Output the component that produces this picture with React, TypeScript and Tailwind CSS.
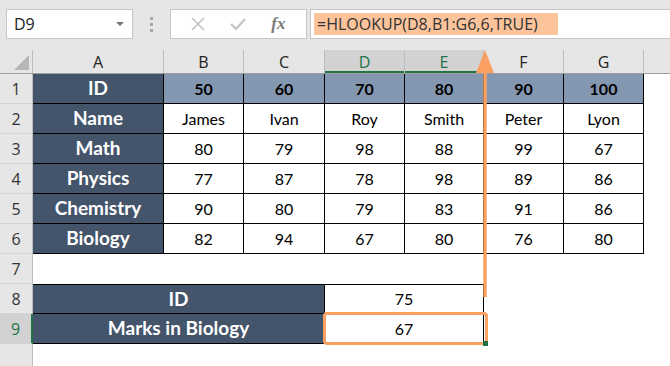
import React from 'react';

const cols = [
  { key: 'A', w: 131 },
  { key: 'B', w: 80 },
  { key: 'C', w: 81 },
  { key: 'D', w: 80 },
  { key: 'E', w: 79 },
  { key: 'F', w: 80 },
  { key: 'G', w: 80 },
];

const ids = ['50', '60', '70', '80', '90', '100'];

const rows: { label: string; values: string[] }[] = [
  { label: 'Name', values: ['James', 'Ivan', 'Roy', 'Smith', 'Peter', 'Lyon'] },
  { label: 'Math', values: ['80', '79', '98', '88', '99', '67'] },
  { label: 'Physics', values: ['77', '87', '78', '98', '89', '86'] },
  { label: 'Chemistry', values: ['90', '80', '79', '83', '91', '86'] },
  { label: 'Biology', values: ['82', '94', '67', '80', '76', '80'] },
];

const cellFont = { fontFamily: 'Lato, "Liberation Sans", sans-serif' };
const uiFont = { fontFamily: '"Open Sans", "DejaVu Sans", sans-serif' };

function RowHead({ n, active }: { n?: number; active?: boolean }) {
  return (
    <div
      className={`w-[33px] shrink-0 h-full flex items-center justify-center text-[16px] border-b border-[#d4d4d4] ${
        active ? 'bg-[#d2d2d2] text-[#217346] border-r-2 border-r-[#217346]' : 'bg-[#e6e6e6] text-[#333] border-r border-r-[#bdbdbd]'
      }`}
      style={uiFont}
    >
      {n}
    </div>
  );
}

function FormulaBar() {
  return (
    <div className="h-[50px] bg-[#e6e6e6] flex items-start pt-[9px] pl-[6px]" style={uiFont}>
      <div className="w-[127px] h-[30px] bg-white border border-[#c6c6c6] flex items-center justify-between pl-[7px] pr-[8px]">
        <span className="text-[16px] text-[#222]">D9</span>
        <span className="w-0 h-0 border-l-[4px] border-r-[4px] border-t-[4px] border-l-transparent border-r-transparent border-t-[#777]" />
      </div>
      <div className="w-[37px] h-[30px] flex flex-col items-center justify-center gap-[3px]">
        <span className="w-[3px] h-[3px] bg-[#a6a6a6]" />
        <span className="w-[3px] h-[3px] bg-[#a6a6a6]" />
        <span className="w-[3px] h-[3px] bg-[#a6a6a6]" />
      </div>
      <div className="w-[137px] h-[30px] bg-white border border-[#c6c6c6] flex items-center justify-around px-[8px]">
        <svg width="14" height="14" viewBox="0 0 14 14">
          <path d="M1 1L13 13M13 1L1 13" stroke="#c2c2c2" strokeWidth="1.6" />
        </svg>
        <svg width="16" height="14" viewBox="0 0 16 14">
          <path d="M1 7L6 12L15 2" stroke="#c2c2c2" strokeWidth="2.2" fill="none" />
        </svg>
        <span className="text-[17px] italic text-[#7a7a7a] font-bold" style={{ fontFamily: '"Liberation Serif", serif' }}>
          fx
        </span>
      </div>
      <div className="flex-1 ml-[3px] h-[30px] bg-white border-y border-l border-[#c6c6c6] flex items-center pl-[3px]">
        <span className="h-[22px] bg-[#fdc49b] text-[16px] text-[#333] pl-[3px] pr-[20px] flex items-center">
          =HLOOKUP(D8,B1:G6,6,TRUE)
        </span>
      </div>
    </div>
  );
}

function ColumnHeaders() {
  return (
    <div className="h-[24px] flex bg-[#e6e6e6] border-b border-[#9e9e9e]" style={uiFont}>
      <div className="w-[33px] shrink-0 border-r border-[#bdbdbd] relative">
        <span
          className="absolute right-[3px] bottom-[3px] w-0 h-0"
          style={{ borderBottom: '15px solid #b7b7b7', borderLeft: '15px solid transparent' }}
        />
      </div>
      {cols.map((c) => {
        const on = c.key === 'D' || c.key === 'E';
        return (
          <div
            key={c.key}
            className={`shrink-0 flex items-center justify-center text-[16px] border-r border-[#bdbdbd] ${
              on ? 'bg-[#d2d2d2] text-[#217346] shadow-[inset_0_-2px_0_#217346]' : 'text-[#222]'
            }`}
            style={{ width: c.w }}
          >
            {c.key}
          </div>
        );
      })}
      <div className="flex-1" />
    </div>
  );
}

const label = 'shrink-0 bg-[#44546a] text-white font-bold text-[19px] flex items-center justify-center border-black';

export default function App() {
  return (
    <div className="w-[670px] h-[366px] overflow-hidden bg-white relative">
      <FormulaBar />
      <ColumnHeaders />

      <div style={cellFont} className="text-[16px] text-black">
        {/* row 1: ids */}
        <div className="h-[30px] flex">
          <RowHead n={1} />
          <div className={`w-[131px] border-r border-b ${label}`}>ID</div>
          {ids.map((v, i) => (
            <div
              key={v}
              className="shrink-0 bg-[#8497b0] font-bold flex items-center justify-center border-r border-b border-black"
              style={{ width: cols[i + 1].w }}
            >
              {v}
            </div>
          ))}
        </div>

        {rows.map((r, ri) => (
          <div key={r.label} className="h-[30px] flex">
            <RowHead n={ri + 2} />
            <div className={`w-[131px] border-r border-b ${label}`}>{r.label}</div>
            {r.values.map((v, i) => (
              <div
                key={i}
                className="shrink-0 flex items-center justify-center border-r border-b border-black"
                style={{ width: cols[i + 1].w }}
              >
                {v}
              </div>
            ))}
          </div>
        ))}

        {/* row 7 empty */}
        <div className="h-[30px] flex">
          <RowHead n={7} />
        </div>

        {/* lookup inputs, A:C and D:E merged */}
        <div className="h-[30px] flex">
          <RowHead n={8} />
          <div className={`w-[292px] border-t border-r border-b ${label}`}>ID</div>
          <div className="w-[159px] shrink-0 flex items-center justify-center border-t border-r border-b border-black">75</div>
        </div>
        <div className="h-[30px] flex">
          <RowHead n={9} active />
          <div className={`w-[292px] border-r border-b ${label}`}>Marks in Biology</div>
          <div className="w-[159px] shrink-0 flex items-center justify-center border-r border-b border-black">67</div>
        </div>
        <div className="h-[30px] flex">
          <RowHead />
        </div>
      </div>

      {/* selection outline around D9:E9 */}
      <div className="absolute left-[323px] top-[312px] w-[165px] h-[33px] border-[3px] border-[#f9a062] rounded-[4px]" />
      <div className="absolute left-[483px] top-[341px] w-[5px] h-[5px] bg-[#217346]" />

      {/* arrow from result up to the formula */}
      <svg className="absolute left-[474px] top-[40px]" width="22" height="258" viewBox="0 0 22 258">
        <path d="M11 20V257" stroke="#f9a062" strokeWidth="3.5" />
        <path d="M11 10L2 33H20Z" fill="#f9a062" />
      </svg>
    </div>
  );
}
